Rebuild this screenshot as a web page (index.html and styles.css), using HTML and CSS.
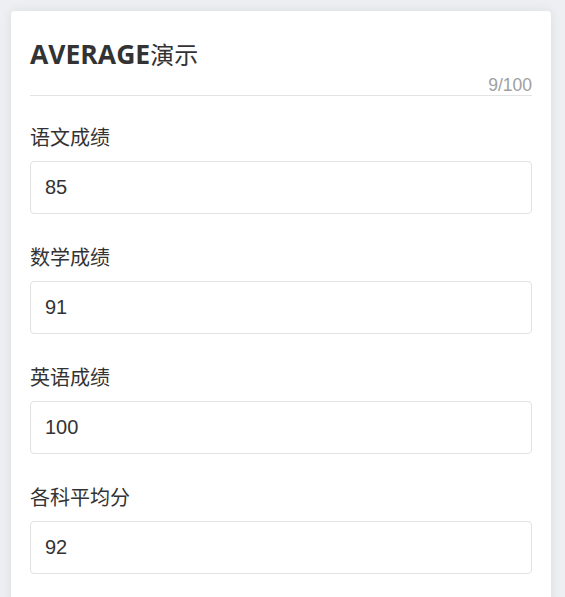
FILE: index.html
```html
<!DOCTYPE html>
<html lang="zh-CN">
<head>
    <meta charset="UTF-8">
    <meta name="viewport" content="width=device-width, initial-scale=1.0">
    <title>AVERAGE演示</title>
    <link rel="stylesheet" href="styles.css">
</head>
<body>

<div class="card">
    <!-- 标题 -->
    <div class="card-header">
        <h1 class="title"><b>AVERAGE</b>演示</h1>
        <div class="counter">9/100</div>
    </div>

    <!-- 成绩输入 -->
    <div class="form-group">
        <label for="chinese">语文成绩</label>
        <input type="text" id="chinese" value="85">
    </div>

    <div class="form-group">
        <label for="math">数学成绩</label>
        <input type="text" id="math" value="91">
    </div>

    <div class="form-group">
        <label for="english">英语成绩</label>
        <input type="text" id="english" value="100">
    </div>

    <div class="form-group">
        <label for="average">各科平均分</label>
        <input type="text" id="average" value="92">
    </div>
</div>

</body>
</html>
```

FILE: styles.css
```css
body {
    font-family: "Open Sans", "Noto Sans CJK SC", sans-serif;
    background-color: #eeeff2;
    margin: 0;
    padding: 11px 14px 0 11px;
    color: #333;
}

.card {
    background-color: #fff;
    border-radius: 4px;
    box-shadow: 0 0 12px rgba(0, 0, 0, 0.08);
    padding: 25px 19px 30px 19px;
}

.card-header {
    border-bottom: 1px solid #e3e3e3;
    margin-bottom: 26px;
}

.title {
    font-size: 24px;
    line-height: 36px;
    font-weight: normal;
    margin: 0;
    color: #333;
}

.title b {
    font-size: 26.5px;
    font-weight: 700;
}

.counter {
    font-family: "Liberation Sans", Arial, sans-serif;
    font-size: 17.5px;
    line-height: 20px;
    margin-top: 2px;
    text-align: right;
    color: #a0a0a0;
}

.form-group {
    margin-bottom: 28px;
}

.form-group label {
    display: block;
    font-family: "Noto Sans CJK SC", sans-serif;
    font-size: 20px;
    line-height: 30px;
    margin-bottom: 9px;
    color: #333;
}

.form-group input {
    display: block;
    box-sizing: border-box;
    width: 100%;
    height: 53px;
    padding: 0 14px;
    border: 1px solid #e2e2e2;
    border-radius: 4px;
    font-family: "Liberation Sans", Arial, sans-serif;
    font-size: 20px;
    color: #333;
    outline: none;
}
```
